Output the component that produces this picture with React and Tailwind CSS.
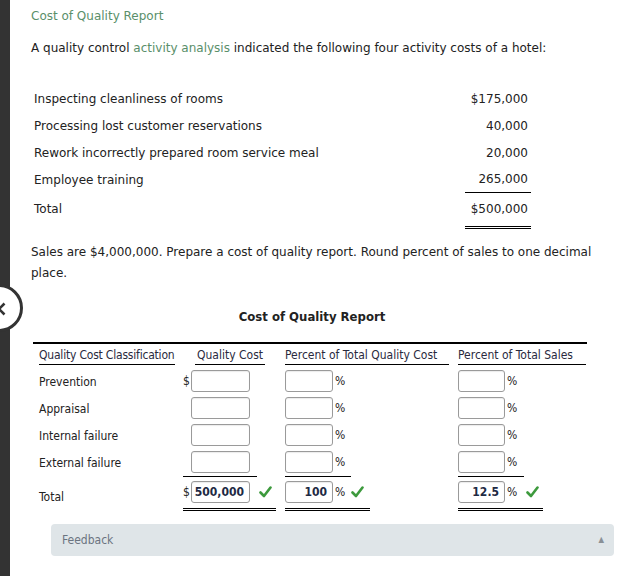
import React from 'react';

const verdana = { fontFamily: '"DejaVu Sans", Verdana, sans-serif' };
const narrow = { fontFamily: '"DejaVu Sans Condensed", "DejaVu Sans", Tahoma, sans-serif', fontStretch: 'condensed' };

const activities = [
    { label: 'Inspecting cleanliness of rooms', amount: '$175,000' },
    { label: 'Processing lost customer reservations', amount: '40,000' },
    { label: 'Rework incorrectly prepared room service meal', amount: '20,000' },
    { label: 'Employee training', amount: '265,000', line: true },
];

const rows = ['Prevention', 'Appraisal', 'Internal failure', 'External failure'];

const Check = () => (
    <svg width="13" height="12" viewBox="0 0 13 12" className="shrink-0">
        <path d="M1.5 6.5 L5 10 L11.5 1.5" fill="none" stroke="#3d9a3d" strokeWidth="2.6" strokeLinecap="round" strokeLinejoin="round" />
    </svg>
);

const Box = ({ w, value }) => (
    <div
        className={`h-[22px] ${w} rounded-[3px] border border-[#9a9a9a] bg-white shadow-[inset_0_1px_1px_rgba(0,0,0,0.08)] flex items-center justify-end pr-[5px] text-[12px] font-bold text-[#1e2a44]`}
        style={verdana}
    >
        {value}
    </div>
);

const App = () => {
    return (
        <div className="relative flex min-h-[576px] bg-white text-[#222]" style={verdana}>
            {/* sidebar edge */}
            <div className="w-[10px] shrink-0 bg-[#333]" />
            <div className="absolute left-[-25px] top-[284px] h-[48px] w-[48px] rounded-full border-[3px] border-[#333] bg-white">
                <svg className="absolute left-[20px] top-[14px]" width="10" height="16" viewBox="0 0 10 16">
                    <path d="M6.5 2.5 L1 8 L6.5 13.5" fill="none" stroke="#333" strokeWidth="2.6" />
                </svg>
            </div>

            <div className="flex-1 pl-[21px] pt-[7px]">
                <h3 className="text-[12px] leading-[18px] text-[#5a8f6a]">Cost of Quality Report</h3>
                <p className="mt-[14px] text-[12px] leading-[18px]">
                    A quality control <span className="text-[#5a8f6a]">activity analysis</span> indicated the following four activity costs of a hotel:
                </p>

                {/* activity costs */}
                <div className="mt-[28px] w-[500px] text-[12px]">
                    {activities.map((a) => (
                        <div key={a.label} className="flex h-[27px] items-center justify-between pl-[3px]">
                            <span>{a.label}</span>
                            <span className={`w-[66px] text-right pr-[3px] ${a.line ? 'border-b border-black self-stretch flex items-center justify-end' : ''}`}>
                                {a.amount}
                            </span>
                        </div>
                    ))}
                    <div className="flex items-start justify-between pl-[3px] pt-[7px]">
                        <span className="leading-[18px]">Total</span>
                        <span className="w-[66px] border-b-[3px] border-double border-black text-right pr-[3px] pb-[8px] leading-[18px]">$500,000</span>
                    </div>
                </div>

                <p className="mt-[13px] w-[570px] text-[12px] leading-[21px]">
                    Sales are $4,000,000. Prepare a cost of quality report. Round percent of sales to one decimal place.
                </p>

                {/* cost of quality report */}
                <div className="mt-[24px] ml-[2px] w-[554px] text-[12px] text-[#222]" style={narrow}>
                    <div className="text-center font-bold text-[13px] leading-[18px] pl-[4px]">Cost of Quality Report</div>

                    <div className="mt-[16px] border-t-2 border-black">
                        <div className="grid grid-cols-[150px_102px_173px_129px] pt-[2px] h-[21px] text-[#2a2a3e] whitespace-nowrap">
                            <div className="pl-[6px]"><span className="inline-block w-[136px] border-b border-black leading-[18px] tracking-[-0.2px]">Quality Cost Classification</span></div>
                            <div className="pl-[12px]"><span className="inline-block w-[70px] border-b border-black leading-[18px] text-center">Quality Cost</span></div>
                            <div><span className="inline-block w-[164px] border-b border-black leading-[18px]">Percent of Total Quality Cost</span></div>
                            <div><span className="inline-block w-[128px] border-b border-black leading-[18px]">Percent of Total Sales</span></div>
                        </div>

                        {rows.map((r, i) => (
                            <div key={r} className={`grid grid-cols-[150px_102px_173px_129px] items-center ${i === 0 ? 'mt-[2px]' : ''} h-[27px]`}>
                                <div className="pl-[6px] pt-[2px]">{r}</div>
                                <div className="flex items-center">
                                    <span className="w-[8px] text-[12px]">{i === 0 ? '$' : ''}</span>
                                    <Box w="w-[59px]" />
                                </div>
                                <div className="flex items-center">
                                    <Box w="w-[48px]" /><span className="ml-[2px]">%</span>
                                </div>
                                <div className="flex items-center">
                                    <Box w="w-[47px]" /><span className="ml-[2px]">%</span>
                                </div>
                            </div>
                        ))}

                        <div className="grid grid-cols-[150px_102px_173px_129px] h-[5px] mt-[1px]">
                            <div />
                            <div className="w-[74px] border-t border-black" />
                            <div className="w-[66px] border-t border-black" />
                            <div className="w-[66px] border-t border-black" />
                        </div>

                        <div className="grid grid-cols-[150px_102px_173px_129px]">
                            <div className="pl-[6px] pt-[7px]">Total</div>
                            <div className="w-[93px] border-b-[3px] border-double border-black pb-[5px] flex items-center">
                                <span className="w-[8px] text-[12px]">$</span>
                                <Box w="w-[59px]" value="500,000" />
                                <span className="ml-[9px]"><Check /></span>
                            </div>
                            <div className="w-[85px] border-b-[3px] border-double border-black pb-[5px] flex items-center">
                                <Box w="w-[48px]" value="100" /><span className="ml-[2px]">%</span>
                                <span className="ml-[6px]"><Check /></span>
                            </div>
                            <div className="w-[85px] border-b-[3px] border-double border-black pb-[5px] flex items-center">
                                <Box w="w-[47px]" value="12.5" /><span className="ml-[2px]">%</span>
                                <span className="ml-[9px]"><Check /></span>
                            </div>
                        </div>
                    </div>
                </div>

                {/* feedback */}
                <div className="mt-[13px] ml-[20px] mr-[4px] flex h-[32px] items-center justify-between rounded-[4px] bg-[#dfe5e8] pl-[11px] pr-[10px] text-[12px] text-[#6b7480]" style={narrow}>
                    <span>Feedback</span>
                    <span className="text-[8px] text-[#8a9096]">▲</span>
                </div>
            </div>
        </div>
    );
};

export default App;
